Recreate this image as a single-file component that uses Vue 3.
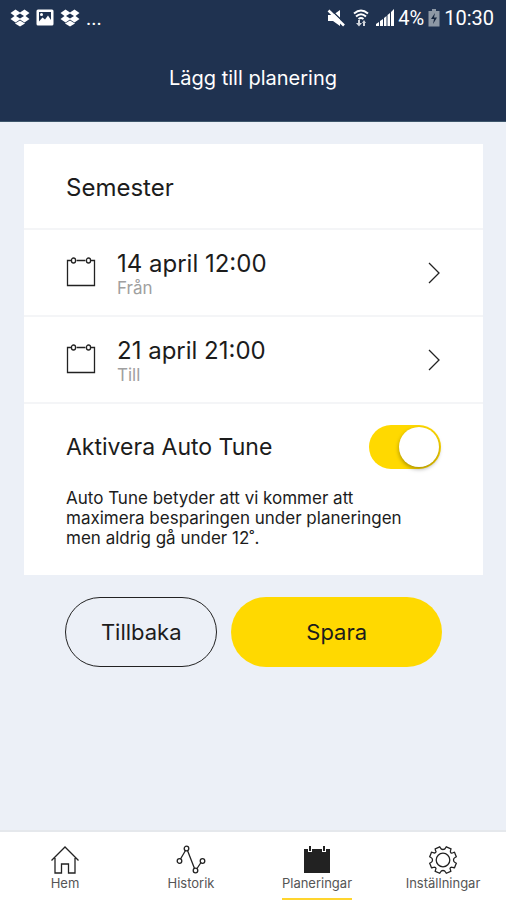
<script setup>
import { ref } from 'vue'

const name = ref('Semester')
const autoTune = ref(true)
const dates = [
  { value: '14 april 12:00', label: 'Från' },
  { value: '21 april 21:00', label: 'Till' },
]
const tabs = [
  { id: 'home', label: 'Hem' },
  { id: 'history', label: 'Historik' },
  { id: 'plans', label: 'Planeringar' },
  { id: 'settings', label: 'Inställningar' },
]
const active = ref('plans')
</script>

<template>
  <div class="screen">
    <header class="header">
      <div class="status">
        <div class="status-group left">
          <svg class="dropbox" viewBox="0 0 20 18" aria-hidden="true">
            <path d="M5.5 0.500 10 3.500 14.500 0.500 19.500 4 15.500 7 19.500 10 14.500 13.500 10 10.500 5.500 13.500 .5 10 4.500 7 .5 4ZM10 4.500 6 7 10 9.500 14 7ZM5 14.500 10 11.500 15 14.500 10 17.500Z" fill-rule="evenodd" />
          </svg>
          <svg class="picture" viewBox="0 0 18 18" aria-hidden="true">
            <path fill-rule="evenodd" d="M2 0.500H16A1.500 1.500 0 0 1 17.500 2V15A1.500 1.500 0 0 1 16 16.500H2A1.500 1.500 0 0 1 .5 15V2A1.500 1.500 0 0 1 2 .5ZM3 3V12.500L6.500 8.500 9 10.500 12 6.500 15 11V3Z" />
            <circle cx="5.500" cy="5.500" r="1.500" />
          </svg>
          <svg class="dropbox" viewBox="0 0 20 18" aria-hidden="true">
            <path d="M5.5 0.500 10 3.500 14.500 0.500 19.500 4 15.500 7 19.500 10 14.500 13.500 10 10.500 5.500 13.500 .5 10 4.500 7 .5 4ZM10 4.500 6 7 10 9.500 14 7ZM5 14.500 10 11.500 15 14.500 10 17.500Z" fill-rule="evenodd" />
          </svg>
          <span class="more">...</span>
        </div>
        <div class="status-group right">
          <svg class="mute" viewBox="0 0 18 18" aria-hidden="true">
            <path d="M1 6H6L13 1V17L6 12H1Z" />
            <path d="M4 1 18 14.500" fill="none" stroke="#1f3250" stroke-width="1.500" />
            <path d="M1.500 1.500 17 16.500" fill="none" stroke="#fff" stroke-width="2.600" />
          </svg>
          <svg class="wifi" viewBox="0 0 16 18" aria-hidden="true">
            <g fill="none" stroke="#fff" stroke-width="2">
              <path d="M1 4.500Q8-1.500 15 4.500M3 7.500Q8 3 13 7.500M5.500 10Q8 8 10.500 10" />
            </g>
            <path d="M5 11H7V14H9L6 17.500 3 14H5ZM11 11 13 14H12V17H10V14H9Z" opacity="0.800" />
          </svg>
          <svg class="signal" viewBox="0 0 18 18" aria-hidden="true">
            <path d="M0 17V15L3 13V17ZM4 17V12L7 10V17ZM8 17V9L10.500 7V17ZM11.500 17V6L14 4V17ZM15 17V3L18 0V17Z" />
          </svg>
          <span class="percent">4%</span>
          <svg class="battery" viewBox="0 0 12 18" aria-hidden="true">
            <path d="M4 0H8V2H11.500V17.500H.5V2H4Z" fill="#8d98a5" />
            <path d="M7 4 3 10H6L5 15 9 8.500H6Z" fill="#14243d" />
          </svg>
          <span class="time">10:30</span>
        </div>
      </div>
      <h1 class="title">Lägg till planering</h1>
    </header>

    <main class="main">
      <section class="card">
        <div class="name-row">
          <input v-model="name" class="name" type="text" aria-label="Namn" />
        </div>
        <button v-for="d in dates" :key="d.label" class="date-row" type="button">
          <svg class="calendar" viewBox="0 0 30 32" aria-hidden="true">
            <path d="M5.500 3.500H1.500V28.500H28.500V3.500H24.500M10.500 3.500H19.500" />
            <rect x="5.500" y="1" width="4" height="5" rx="2" />
            <rect x="20.500" y="1" width="4" height="5" rx="2" />
          </svg>
          <span class="date-text">
            <span class="date-value">{{ d.value }}</span>
            <span class="date-label">{{ d.label }}</span>
          </span>
          <svg class="chevron" viewBox="0 0 14 24" aria-hidden="true">
            <path d="M2 2 12 12 2 22" />
          </svg>
        </button>
        <div class="tune">
          <div class="tune-head">
            <label for="auto-tune">Aktivera Auto Tune</label>
            <input id="auto-tune" v-model="autoTune" class="switch" type="checkbox" role="switch" />
          </div>
          <p class="tune-text">Auto Tune betyder att vi kommer att maximera besparingen under planeringen men aldrig gå under 12˚.</p>
        </div>
      </section>

      <div class="actions">
        <button class="btn back" type="button">Tillbaka</button>
        <button class="btn save" type="button">Spara</button>
      </div>
    </main>

    <nav class="nav">
      <a v-for="t in tabs" :key="t.id" href="#" class="tab" :class="{ active: active === t.id }" @click.prevent="active = t.id">
        <svg v-if="t.id === 'home'" class="tab-icon" viewBox="0 0 30 30" aria-hidden="true">
          <path d="M5 13V28H11.500V19H18.500V28H25V13M1.500 15.500 15 2 28.500 15.500" />
        </svg>
        <svg v-else-if="t.id === 'history'" class="tab-icon" viewBox="0 0 30 30" aria-hidden="true">
          <path d="M4.500 14 9.500 5.500M11.500 5.500 18.500 23.500M21 23.500 25 17.500" />
          <circle cx="3.500" cy="16" r="2.300" />
          <circle cx="10.500" cy="3.500" r="2.300" />
          <circle cx="19.500" cy="25.500" r="2.300" />
          <circle cx="26.500" cy="16" r="2.300" />
        </svg>
        <svg v-else-if="t.id === 'plans'" class="tab-icon" viewBox="0 0 30 30" aria-hidden="true">
          <path class="solid" d="M2 4H6V7H10V4H20V7H24V4H28V28H2Z" />
          <path d="M8 1V6M22 1V6" stroke-width="2" />
        </svg>
        <svg v-else class="tab-icon" viewBox="0 0 30 30" aria-hidden="true">
          <circle cx="15" cy="15" r="6.800" />
          <path d="M15 4.500Q17 4.500 17.500 3L18.300 1.800 23 3.800 22.500 5.500Q22 7 23 8 24 8.500 25.500 7.500L26.500 7.200 28.300 11.700 27 12.500Q25.500 13.300 25.500 15 25.500 16.700 27 17.500L28.300 18.300 26.500 22.800 25 22.500Q23.500 22 22.500 22.500 21.500 23.500 22.500 25L22.800 26.300 18.300 28.300 17.500 27Q16.700 25.500 15 25.500 13.300 25.500 12.500 27L11.700 28.300 7.200 26.300 7.500 25Q8.500 23.500 7.500 22.500 6.500 22 5 22.500L3.500 22.800 1.700 18.300 3 17.500Q4.500 16.700 4.500 15 4.500 13.300 3 12.500L1.700 11.700 3.500 7.200 5 7.500Q6.500 8.500 7.500 7.500 8.500 7 7.500 5.500L7.200 3.800 11.700 1.800 12.500 3Q13 4.500 15 4.500Z" />
        </svg>
        <span class="tab-label">{{ t.label }}</span>
      </a>
    </nav>
  </div>
</template>

<style>
body {
  margin: 0;
}
</style>

<style scoped>
.screen,
.screen * {
  box-sizing: border-box;
}
.screen {
  display: flex;
  flex-direction: column;
  min-height: 100vh;
  background: #ecf0f7;
  color: #1c1c1c;
  font-family: Inter, "Liberation Sans", sans-serif;
}
button,
input {
  margin: 0;
  padding: 0;
  border: 0;
  background: none;
  color: inherit;
  font: inherit;
}
.header {
  background: #1f3250;
  border-bottom: 1px solid #3d566b;
  color: #fff;
  padding-bottom: 28px;
}
.status {
  display: flex;
  justify-content: space-between;
  height: 36px;
  padding: 0 12px 0 10px;
  font-family: Roboto, sans-serif;
  font-size: 20px;
}
.status-group {
  display: flex;
  align-items: center;
}
.status svg {
  height: 18px;
  fill: #fff;
}
.left {
  gap: 6px;
}
.right {
  gap: 4px;
}
.dropbox {
  width: 20px;
}
.picture,
.mute,
.signal {
  width: 18px;
}
.wifi {
  width: 16px;
  margin: 0 3px 0 4px;
}
.battery {
  width: 12px;
}
.title {
  margin: 0;
  padding-top: 28px;
  font-size: 20px;
  line-height: 29px;
  font-weight: 400;
  text-align: center;
}
.main {
  flex: 1;
  padding: 22px 23px 22px 24px;
}
.card {
  background: #fff;
}
.name-row {
  display: flex;
  height: 84px;
  padding: 2px 42px 0;
}
.name {
  width: 100%;
  font-size: 24px;
}
.date-row {
  display: flex;
  align-items: center;
  width: 100%;
  height: 87px;
  padding: 0 42px;
  border-top: 2px solid #f4f5f7;
  text-align: left;
}
.calendar {
  width: 30px;
  height: 32px;
  margin-right: 21px;
}
.calendar,
.chevron,
.tab-icon {
  fill: none;
  stroke: #222;
  stroke-width: 1.300;
}
.date-text {
  display: flex;
  flex: 1;
  flex-direction: column;
  padding-top: 3px;
}
.date-value {
  font-size: 24px;
  line-height: 28px;
}
.date-label {
  color: #a0a0a0;
  font-size: 17px;
  line-height: 20px;
}
.chevron {
  width: 14px;
  height: 24px;
}
.tune {
  padding: 20px 42px 27px;
  border-top: 2px solid #f4f5f7;
}
.tune-head {
  display: flex;
  align-items: center;
  justify-content: space-between;
  height: 46px;
  font-size: 23px;
}
.switch {
  appearance: none;
  display: flex;
  align-items: center;
  width: 72px;
  height: 44px;
  padding: 2px;
  border-radius: 22px;
  background: #d5d8dd;
  cursor: pointer;
}
.switch::before {
  content: "";
  width: 40px;
  height: 40px;
  border-radius: 50%;
  background: #fff;
  box-shadow: 0 2px 4px rgba(0, 0, 0, 0.35);
}
.switch:checked {
  justify-content: flex-end;
  background: #ffd900;
}
.tune-text {
  margin: 18px 0 0;
  padding-right: 20px;
  font-size: 17px;
  line-height: 20px;
}
.actions {
  display: flex;
  gap: 14px;
  padding: 22px 41px 0;
}
.btn {
  height: 70px;
  border-radius: 35px;
  font-size: 22px;
}
.back {
  flex: 5;
  border: 1px solid #222;
}
.save {
  flex: 7;
  background: #ffd900;
}
.nav {
  display: flex;
  height: 70px;
  padding-left: 2px;
  border-top: 2px solid #e5e8ec;
  background: #fff;
}
.tab {
  display: flex;
  flex: 1;
  flex-direction: column;
  align-items: center;
  padding-top: 13px;
  color: #555;
  text-decoration: none;
}
.tab-icon {
  width: 30px;
  height: 30px;
}
.solid {
  fill: #222;
  stroke: none;
}
.tab-label {
  height: 25px;
  font-size: 13px;
  line-height: 16px;
}
.active .tab-label {
  border-bottom: 2px solid #ffd52e;
}
</style>
